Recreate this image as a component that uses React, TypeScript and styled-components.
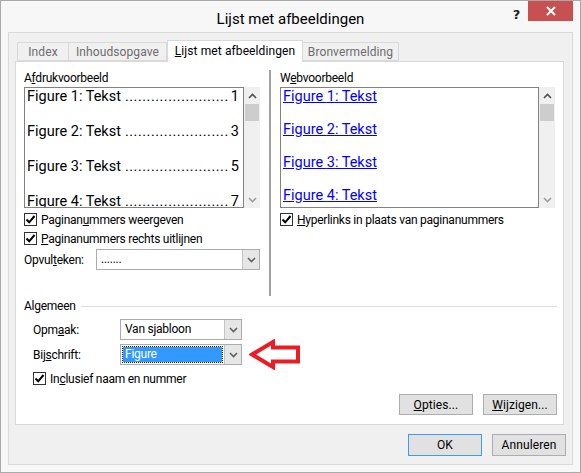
import React from 'react'
import styled, { createGlobalStyle } from 'styled-components'

const GlobalStyle = createGlobalStyle`
  html, body {
    margin: 0;
    padding: 0;
    background: #ffffff;
  }
  body {
    font-family: Roboto, 'Liberation Sans', sans-serif;
    font-size: 12px;
    letter-spacing: -0.25px;
    color: #000;
  }
`

const Window = styled.div`
  width: 581px;
  height: 473px;
  box-sizing: border-box;
  border: 1px solid #a9a9a9;
  background: #f7f7f7;
  padding: 0 7px 7px 7px;
  display: flex;
  flex-direction: column;
`

const TitleBar = styled.div`
  height: 31px;
  display: grid;
  grid-template-columns: 1fr auto 1fr;
  align-items: start;
`

const Title = styled.div`
  font-size: 15px;
  line-height: 20px;
  letter-spacing: 0;
  padding-top: 8px;
  color: #000;
  white-space: nowrap;
`

const TitleButtons = styled.div`
  display: flex;
  justify-content: flex-end;
  align-items: flex-start;
`

const HelpButton = styled.div`
  font-family: 'DejaVu Sans', sans-serif;
  font-weight: bold;
  font-size: 13px;
  line-height: 16px;
  margin: 6px 8px 0 0;
  color: #222;
`

const CloseButton = styled.div`
  width: 45px;
  height: 20px;
  background: #c75050;
  display: flex;
  align-items: center;
  justify-content: center;
`

const Client = styled.div`
  flex: 1;
  box-sizing: border-box;
  border: 1px solid #dadada;
  background: #f0f0f0;
  padding: 7px 8px 8px 6px;
  display: flex;
  flex-direction: column;
`

const TabStrip = styled.div`
  height: 21px;
  display: flex;
  align-items: flex-end;
  padding-left: 2px;
`

const Tab = styled.div<{ $w: number; $active?: boolean }>`
  width: ${p => p.$w}px;
  height: ${p => (p.$active ? 22 : 19)}px;
  margin-bottom: ${p => (p.$active ? -1 : 0)}px;
  box-sizing: border-box;
  border: 1px solid #d9d9d9;
  border-bottom: ${p => (p.$active ? 'none' : '1px solid #d9d9d9')};
  border-left: ${p => (p.$active ? '1px solid #d9d9d9' : 'none')};
  background: ${p => (p.$active ? '#ffffff' : '#f0f0f0')};
  color: ${p => (p.$active ? '#000' : '#6d6d6d')};
  letter-spacing: 0.1px;
  position: relative;
  z-index: ${p => (p.$active ? 1 : 0)};
  display: flex;
  align-items: center;
  justify-content: center;
  padding-bottom: ${p => (p.$active ? 2 : 0)}px;
  white-space: nowrap;
  &:first-child {
    border-left: 1px solid #d9d9d9;
  }
`

const Panel = styled.div`
  height: 364px;
  box-sizing: border-box;
  border: 1px solid #d9d9d9;
  background: #fff;
  padding: 8px 6px 9px 8px;
  display: flex;
  flex-direction: column;
`

const TopSection = styled.div`
  height: 226px;
  display: grid;
  grid-template-columns: 236px 1px 276px;
  column-gap: 9px;
`

const Separator = styled.div`
  background: #a0a0a0;
  margin-right: -1px;
`

const Column = styled.div`
  display: flex;
  flex-direction: column;
`

const RightColumn = styled(Column)`
  margin-left: 1px;
`

const Label = styled.div`
  line-height: 16px;
  white-space: nowrap;
  flex-shrink: 0;
`

const ListWrap = styled.div`
  margin-top: 1px;
  height: 121px;
  display: flex;
`

const ListBox = styled.div<{ $padRight?: number }>`
  flex: 1;
  box-sizing: border-box;
  border: 1px solid #828282;
  overflow: hidden;
  padding: 0 ${p => p.$padRight ?? 6}px 0 2px;
`

const PreviewRow = styled.div`
  height: 18px;
  margin-bottom: 17px;
  display: flex;
  align-items: center;
  justify-content: space-between;
  font-size: 14.5px;
  line-height: 18px;
  letter-spacing: 0;
  white-space: nowrap;
`

const Leader = styled.span`
  letter-spacing: 0.5px;
  padding: 0 2px 0 4px;
`

const LinkRow = styled.div`
  height: 18px;
  margin-bottom: 15px;
  font-size: 14.5px;
  line-height: 18px;
  letter-spacing: 0;
  color: #0000ff;
  text-decoration: underline;
  white-space: nowrap;
`

const ScrollBar = styled.div`
  width: 16px;
  background: #f0f0f0;
  display: flex;
  flex-direction: column;
  align-items: center;
`

const ScrollArrow = styled.div`
  height: 17px;
  display: flex;
  align-items: center;
  justify-content: center;
`

const ScrollThumb = styled.div`
  width: 14px;
  height: 17px;
  background: #cdcdcd;
`

const ScrollTrack = styled.div`
  flex: 1;
`

const CheckRow = styled.label<{ $indent?: number }>`
  height: 19px;
  display: flex;
  align-items: center;
  gap: 4px;
  padding-left: ${p => p.$indent ?? 0}px;
  white-space: nowrap;
`

const CheckBox = styled.span`
  width: 13px;
  height: 13px;
  box-sizing: border-box;
  border: 1px solid #333;
  background: #fff;
  display: inline-flex;
  align-items: center;
  justify-content: center;
`

const FieldRow = styled.div<{ $labelWidth: number; $indent?: number }>`
  height: 21px;
  display: flex;
  align-items: center;
  padding-left: ${p => p.$indent ?? 0}px;
  & > ${Label} {
    width: ${p => p.$labelWidth}px;
  }
`

const Combo = styled.div<{ $w: number }>`
  width: ${p => p.$w}px;
  height: 21px;
  flex-shrink: 0;
  box-sizing: border-box;
  border: 1px solid #acacac;
  background: #fff;
  display: flex;
`

const ComboText = styled.div<{ $selected?: boolean }>`
  flex: 1;
  margin: 2px;
  padding-left: 2px;
  line-height: 15px;
  color: ${p => (p.$selected ? '#fff' : '#000')};
  background: ${p => (p.$selected ? '#3399ff' : 'transparent')};
  outline: ${p => (p.$selected ? '1px dotted #1a1a1a' : 'none')};
  white-space: nowrap;
  overflow: hidden;
`

const ComboButton = styled.div`
  width: 16px;
  border-left: 1px solid #c4c4c4;
  background: #e6e6e6;
  display: flex;
  align-items: center;
  justify-content: center;
`

const GroupHeader = styled.div`
  height: 16px;
  margin-top: 2px;
  display: flex;
  align-items: center;
  gap: 5px;
`

const GroupLine = styled.div`
  flex: 1;
  height: 1px;
  background: #dcdcdc;
`

const GroupBody = styled.div`
  margin-top: 5px;
  display: flex;
  flex-direction: column;
  gap: 4px;
`

const ButtonRow = styled.div`
  margin-top: auto;
  display: flex;
  justify-content: flex-end;
  gap: 10px;
`

const FooterRow = styled(ButtonRow)`
  margin-top: 9px;
  margin-right: -2px;
`

const Button = styled.div<{ $default?: boolean; $h?: number }>`
  width: 74px;
  height: ${p => p.$h ?? 21}px;
  box-sizing: border-box;
  border: 1px solid ${p => (p.$default ? '#3c9cf0' : '#adadad')};
  background: #e1e1e1;
  display: flex;
  align-items: center;
  justify-content: center;
  letter-spacing: 0.1px;
`

const U = styled.span`
  text-decoration: underline;
`

const Arrow = styled.svg`
  margin: -5px 0 -5px 7px;
  flex: none;
`

const Check = () => (
  <CheckBox>
    <svg width="11" height="11" viewBox="0 0 11 11">
      <path d="M1.5 5.5 L4.2 8.3 L9.5 2" fill="none" stroke="#000" strokeWidth="2" />
    </svg>
  </CheckBox>
)

const Chevron = ({ up, color = '#606060' }: { up?: boolean; color?: string }) => (
  <svg width="9" height="6" viewBox="0 0 9 6">
    <path
      d={up ? 'M1 5 L4.5 1.5 L8 5' : 'M1 1 L4.5 4.5 L8 1'}
      fill="none"
      stroke={color}
      strokeWidth="1.6"
    />
  </svg>
)

const Scroll = () => (
  <ScrollBar>
    <ScrollArrow>
      <Chevron up color="#505050" />
    </ScrollArrow>
    <ScrollThumb />
    <ScrollTrack />
    <ScrollArrow>
      <Chevron color="#a0a0a0" />
    </ScrollArrow>
  </ScrollBar>
)

const DropDown = ({ w, value, selected }: { w: number; value: string; selected?: boolean }) => (
  <Combo $w={w}>
    <ComboText $selected={selected}>{value}</ComboText>
    <ComboButton>
      <Chevron />
    </ComboButton>
  </Combo>
)

const figures = [
  { n: 1, page: 1 },
  { n: 2, page: 3 },
  { n: 3, page: 5 },
  { n: 4, page: 7 },
]

const App = () => (
  <>
    <GlobalStyle />
    <Window>
      <TitleBar>
        <div />
        <Title>Lijst met afbeeldingen</Title>
        <TitleButtons>
          <HelpButton>?</HelpButton>
          <CloseButton>
            <svg width="10" height="10" viewBox="0 0 10 10">
              <path d="M1 1 L9 9 M9 1 L1 9" stroke="#fff" strokeWidth="2" />
            </svg>
          </CloseButton>
        </TitleButtons>
      </TitleBar>
      <Client>
        <TabStrip>
          <Tab $w={52}>Index</Tab>
          <Tab $w={98}>Inhoudsopgave</Tab>
          <Tab $w={136} $active>
            <span>
              <U>L</U>ijst met afbeeldingen
            </span>
          </Tab>
          <Tab $w={96}>Bronvermelding</Tab>
        </TabStrip>
        <Panel>
          <TopSection>
            <Column>
              <Label>
                A<U>f</U>drukvoorbeeld
              </Label>
              <ListWrap>
                <ListBox $padRight={10}>
                  {figures.map(f => (
                    <PreviewRow key={f.n}>
                      <span>Figure {f.n}: Tekst</span>
                      <Leader>{'.'.repeat(24)}</Leader>
                      <span>{f.page}</span>
                    </PreviewRow>
                  ))}
                </ListBox>
                <Scroll />
              </ListWrap>
              <CheckRow style={{ marginTop: 2 }}>
                <Check />
                <span>
                  Paginan<U>u</U>mmers weergeven
                </span>
              </CheckRow>
              <CheckRow>
                <Check />
                <span>
                  <U>P</U>aginanummers rechts uitlijnen
                </span>
              </CheckRow>
              <FieldRow $labelWidth={72} style={{ marginTop: 1 }}>
                <Label>
                  Opvul<U>t</U>eken:
                </Label>
                <DropDown w={164} value="......." />
              </FieldRow>
            </Column>
            <Separator />
            <RightColumn>
              <Label>
                W<U>e</U>bvoorbeeld
              </Label>
              <ListWrap>
                <ListBox>
                  {figures.map(f => (
                    <LinkRow key={f.n}>Figure {f.n}: Tekst</LinkRow>
                  ))}
                </ListBox>
                <Scroll />
              </ListWrap>
              <CheckRow style={{ marginTop: 2 }}>
                <Check />
                <span>
                  <U>H</U>yperlinks in plaats van paginanummers
                </span>
              </CheckRow>
            </RightColumn>
          </TopSection>
          <GroupHeader>
            <Label>Algemeen</Label>
            <GroupLine />
          </GroupHeader>
          <GroupBody>
            <FieldRow $labelWidth={87} $indent={9}>
              <Label>
                Opm<U>a</U>ak:
              </Label>
              <DropDown w={122} value="Van sjabloon" />
            </FieldRow>
            <FieldRow $labelWidth={87} $indent={9}>
              <Label>
                Bij<U>s</U>chrift:
              </Label>
              <DropDown w={122} value="Figure" selected />
              <Arrow width="52" height="31" viewBox="0 0 52 31">
                <path
                  d="M3 15.5 L24 3 L24 8.5 L49 8.5 L49 22.5 L24 22.5 L24 28 Z"
                  fill="#fff"
                  stroke="#ed1c24"
                  strokeWidth="4"
                  strokeLinejoin="miter"
                />
              </Arrow>
            </FieldRow>
            <CheckRow $indent={9}>
              <Check />
              <span>
                In<U>c</U>lusief naam en nummer
              </span>
            </CheckRow>
          </GroupBody>
          <ButtonRow>
            <Button>
              <span>
                <U>O</U>pties...
              </span>
            </Button>
            <Button>
              <span>
                <U>W</U>ijzigen...
              </span>
            </Button>
          </ButtonRow>
        </Panel>
        <FooterRow>
          <Button $default $h={22}>
            OK
          </Button>
          <Button $h={22}>Annuleren</Button>
        </FooterRow>
      </Client>
    </Window>
  </>
)

export default App
